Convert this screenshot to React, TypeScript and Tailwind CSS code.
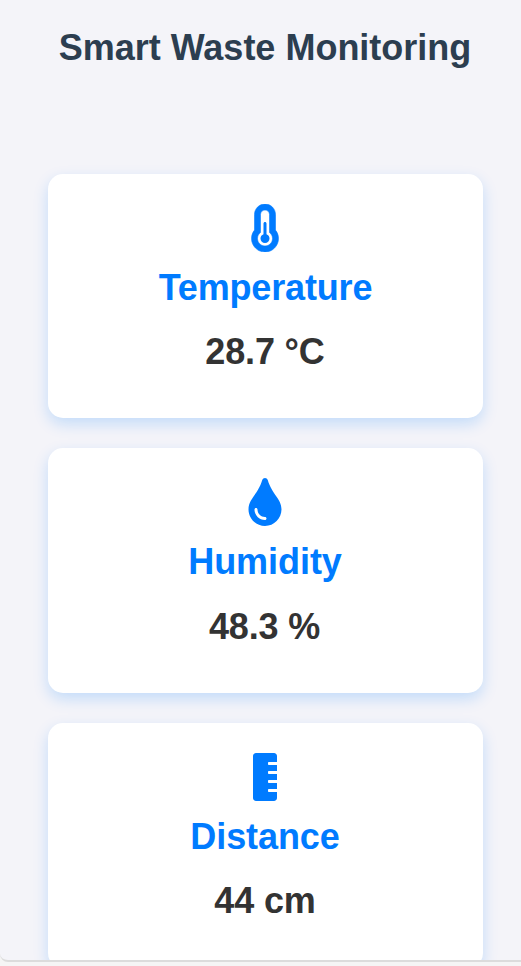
import type { ComponentType } from "react";
import { FaTint, FaRulerVertical } from "react-icons/fa";

function Thermometer({ className }: { className?: string }) {
  return (
    <svg viewBox="0 0 320 512" fill="currentColor" className={className}>
      <path d="M176 322.9V208c0-8.8-7.2-16-16-16s-16 7.2-16 16v114.9c-18.6 6.6-32 24.2-32 45.1c0 26.5 21.5 48 48 48s48-21.5 48-48c0-20.8-13.4-38.5-32-45.1z" />
      <path
        stroke="currentColor"
        strokeWidth="6"
        d="M272 278.5V112C272 50.1 221.9 0 160 0S48 50.1 48 112v166.5C28.3 303.2 16 334 16 368c0 79.5 64.5 144 144 144s144-64.5 144-144c0-33.9-12.2-64.9-32-89.5zM160 448c-44.1 0-80-35.9-80-80c0-25.5 12.2-48.9 32-63.7V112c0-26.5 21.5-48 48-48s48 21.5 48 48v192.3c19.8 14.7 32 38.2 32 63.7c0 44.1-35.9 80-80 80z"
      />
    </svg>
  );
}

type Card = {
  icon: ComponentType<{ className?: string }>;
  label: string;
  value: string;
  height: string;
  labelStyle: string;
  valueStyle: string;
};

const cards: Card[] = [
  { icon: Thermometer, label: "Temperature", value: "28.7 °C", height: "h-[244px]", labelStyle: "tracking-[-0.16px]", valueStyle: "mr-px mt-[23px]" },
  { icon: FaTint, label: "Humidity", value: "48.3 %", height: "h-[245px]", labelStyle: "mr-px tracking-[-0.05px]", valueStyle: "mr-0.5 mt-6" },
  { icon: FaRulerVertical, label: "Distance", value: "44 cm", height: "h-[245px]", labelStyle: "mr-px tracking-[-0.1px]", valueStyle: "mr-px mt-[23px]" },
];

export default function App() {
  return (
    <div className="h-[966px] overflow-hidden bg-[#f5f5f5] font-['Liberation_Sans',Arial,sans-serif]">
      <main className="h-[962px] overflow-hidden rounded-bl-lg border-b-2 border-[#dcdcdc] bg-[#f4f4f9] pl-12 pr-[38px] pt-[27px] text-center">
        <h1 className="mr-px text-[36px] font-bold leading-[41px] text-[#2c3e50]">Smart Waste Monitoring</h1>
        <div className="mt-[106px] flex flex-col gap-[30px]">
          {cards.map(({ icon: Icon, label, value, height, labelStyle, valueStyle }) => (
            <section key={label} className={`flex ${height} shrink-0 flex-col items-center rounded-[15px] bg-white pt-[30px] shadow-[0_6px_15px_rgba(0,123,255,0.2)]`}>
              <Icon className="mr-px size-12 text-[#007bff]" />
              <h2 className={`mt-[15px] text-[36px] font-bold leading-[41px] text-[#007bff] ${labelStyle}`}>{label}</h2>
              <p className={`text-[36px] font-bold leading-[41px] tracking-[-0.15px] text-[#333] ${valueStyle}`}>{value}</p>
            </section>
          ))}
        </div>
      </main>
    </div>
  );
}
